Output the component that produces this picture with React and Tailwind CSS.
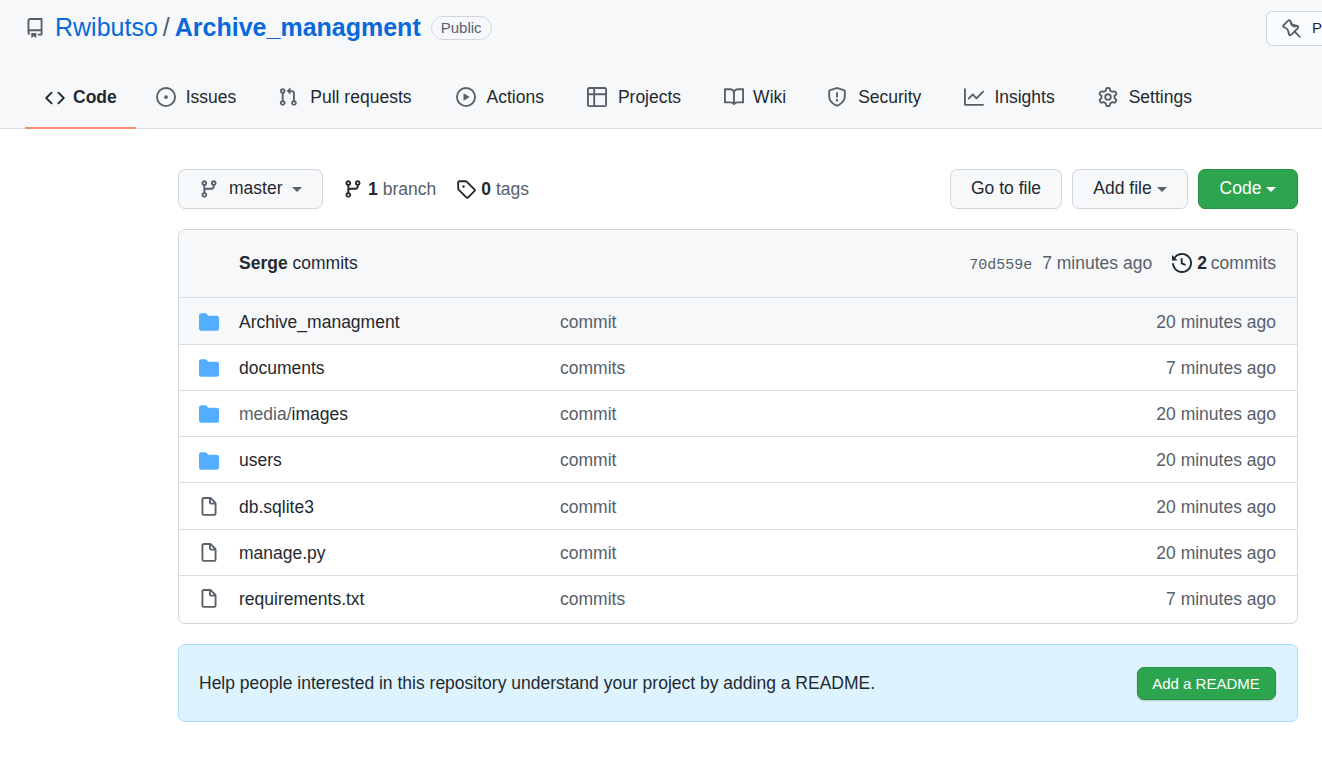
import React from "react";

const icons = {
  repo: "M2 2.5A2.5 2.5 0 014.5 0h8.75a.75.75 0 01.75.75v12.5a.75.75 0 01-.75.75h-2.5a.75.75 0 110-1.5h1.75v-2h-8a1 1 0 00-.714 1.7.75.75 0 01-1.072 1.05A2.495 2.495 0 012 11.5v-9zm10.5-1V9h-8c-.356 0-.694.074-1 .208V2.5a1 1 0 011-1h8zM5 12.25v3.25a.25.25 0 00.4.2l1.45-1.087a.25.25 0 01.3 0L8.6 15.7a.25.25 0 00.4-.2v-3.25a.25.25 0 00-.25-.25h-3.5a.25.25 0 00-.25.25z",
  code: "M4.72 3.22a.75.75 0 011.06 1.06L2.06 8l3.72 3.72a.75.75 0 11-1.06 1.06L.47 8.53a.75.75 0 010-1.06l4.25-4.25zm6.56 0a.75.75 0 10-1.06 1.06L13.94 8l-3.72 3.72a.75.75 0 101.06 1.06l4.25-4.25a.75.75 0 000-1.06l-4.25-4.25z",
  issue: "M8 9.5a1.5 1.5 0 100-3 1.5 1.5 0 000 3zM8 0a8 8 0 100 16A8 8 0 008 0zM1.5 8a6.5 6.5 0 1113 0 6.5 6.5 0 01-13 0z",
  pull: "M7.177 3.073L9.573.677A.25.25 0 0110 .854v4.792a.25.25 0 01-.427.177L7.177 3.427a.25.25 0 010-.354zM3.75 2.5a.75.75 0 100 1.5.75.75 0 000-1.5zm-2.25.75a2.25 2.25 0 113 2.122v5.256a2.251 2.251 0 11-1.5 0V5.372A2.25 2.25 0 011.5 3.25zM11 2.5h-1V4h1a1 1 0 011 1v5.628a2.251 2.251 0 101.5 0V5A2.5 2.5 0 0011 2.5zm1 10.25a.75.75 0 111.5 0 .75.75 0 01-1.5 0zM3.75 12a.75.75 0 100 1.5.75.75 0 000-1.5z",
  play: "M1.5 8a6.5 6.5 0 1113 0 6.5 6.5 0 01-13 0zM8 0a8 8 0 100 16A8 8 0 008 0zM6.379 5.227A.25.25 0 006 5.442v5.117a.25.25 0 00.379.214l4.264-2.559a.25.25 0 000-.428L6.379 5.227z",
  project: "M0 1.75C0 .784.784 0 1.75 0h12.5C15.216 0 16 .784 16 1.75v12.5A1.75 1.75 0 0114.25 16H1.75A1.75 1.75 0 010 14.25V1.75zM1.5 6.5v7.75c0 .138.112.25.25.25H5v-8H1.5zM5 5H1.5V1.75a.25.25 0 01.25-.25H5V5zm1.5 1.5v8h7.75a.25.25 0 00.25-.25V6.5h-8zm8-1.5h-8V1.5h7.75a.25.25 0 01.25.25V5z",
  book: "M0 1.75A.75.75 0 01.75 1h4.253c1.227 0 2.317.59 3 1.501A3.744 3.744 0 0111.006 1h4.245a.75.75 0 01.75.75v10.5a.75.75 0 01-.75.75h-4.507a2.25 2.25 0 00-1.591.659l-.622.621a.75.75 0 01-1.06 0l-.622-.621A2.25 2.25 0 005.258 13H.75a.75.75 0 01-.75-.75V1.75zm8.755 3a2.25 2.25 0 012.25-2.25H14.5v9h-3.757c-.71 0-1.4.201-1.992.572l.004-7.322zm-1.504 7.324l.004-5.073-.002-2.253A2.25 2.25 0 005.003 2.5H1.5v9h3.757a3.75 3.75 0 011.994.574z",
  shield: "M7.467.133a1.75 1.75 0 011.066 0l5.25 1.68A1.75 1.75 0 0115 3.48V7c0 1.566-.32 3.182-1.303 4.682-.983 1.498-2.585 2.813-5.032 3.855a1.7 1.7 0 01-1.33 0c-2.447-1.042-4.049-2.357-5.032-3.855C1.32 10.182 1 8.566 1 7V3.48a1.75 1.75 0 011.217-1.667l5.25-1.68zm.61 1.429a.25.25 0 00-.153 0l-5.25 1.68a.25.25 0 00-.174.238V7c0 1.358.275 2.666 1.057 3.86.784 1.194 2.121 2.34 4.366 3.297a.2.2 0 00.154 0c2.245-.956 3.582-2.104 4.366-3.298C13.225 9.666 13.5 8.36 13.5 7V3.48a.25.25 0 00-.174-.237l-5.25-1.68zM9 10.5a1 1 0 11-2 0 1 1 0 012 0zm-.25-5.75a.75.75 0 10-1.5 0v3a.75.75 0 001.5 0v-3z",
  graph: "M1.5 1.75a.75.75 0 00-1.5 0v12.5c0 .414.336.75.75.75h14.5a.75.75 0 000-1.5H1.5V1.75zm14.28 2.53a.75.75 0 00-1.06-1.06L10 7.94 7.53 5.47a.75.75 0 00-1.06 0L3.22 8.72a.75.75 0 001.06 1.06L7 7.06l2.47 2.47a.75.75 0 001.06 0l5.25-5.25z",
  gear: "M7.429 1.525a6.593 6.593 0 011.142 0c.036.003.108.036.137.146l.289 1.105c.147.56.55.967.997 1.189.174.086.341.183.501.29.417.278.97.423 1.53.27l1.102-.303c.11-.03.175.016.195.046.219.31.41.641.573.989.014.031.022.11-.059.19l-.815.806c-.411.406-.562.957-.53 1.456a4.588 4.588 0 010 .582c-.032.499.119 1.05.53 1.456l.815.806c.08.08.073.159.059.19a6.494 6.494 0 01-.573.99c-.02.029-.086.074-.195.045l-1.103-.303c-.559-.153-1.112-.008-1.529.27-.16.107-.327.204-.5.29-.449.222-.851.628-.998 1.189l-.289 1.105c-.029.11-.101.143-.137.146a6.613 6.613 0 01-1.142 0c-.036-.003-.108-.037-.137-.146l-.289-1.105c-.147-.56-.55-.967-.997-1.189a4.502 4.502 0 01-.501-.29c-.417-.278-.97-.423-1.53-.27l-1.102.303c-.11.03-.175-.016-.195-.046a6.492 6.492 0 01-.573-.989c-.014-.031-.022-.11.059-.19l.815-.806c.411-.406.562-.957.53-1.456a4.587 4.587 0 010-.582c.032-.499-.119-1.05-.53-1.456l-.815-.806c-.08-.08-.073-.159-.059-.19a6.44 6.44 0 01.573-.99c.02-.029.086-.075.195-.045l1.103.303c.559.153 1.112.008 1.529-.27.16-.107.327-.204.5-.29.449-.222.851-.628.998-1.189l.289-1.105c.029-.11.101-.143.137-.146zM8 0c-.236 0-.47.01-.701.03-.743.065-1.29.615-1.458 1.261l-.29 1.106c-.017.066-.078.158-.211.224a5.994 5.994 0 00-.668.386c-.123.082-.233.09-.3.071L3.27 2.776c-.644-.177-1.392.02-1.82.63a7.977 7.977 0 00-.704 1.217c-.315.675-.111 1.422.363 1.891l.815.806c.05.048.098.147.088.294a6.084 6.084 0 000 .772c.01.147-.038.246-.088.294l-.815.806c-.474.469-.678 1.216-.363 1.891.2.428.436.835.704 1.218.428.609 1.176.806 1.82.63l1.103-.303c.066-.019.176-.011.299.071.213.143.436.272.668.386.133.066.194.158.212.224l.289 1.106c.169.646.715 1.196 1.458 1.26a8.094 8.094 0 001.402 0c.743-.064 1.29-.614 1.458-1.26l.29-1.106c.017-.066.078-.158.211-.224a5.98 5.98 0 00.668-.386c.123-.082.233-.09.3-.071l1.102.302c.644.177 1.392-.02 1.82-.63.268-.382.505-.789.704-1.217.315-.675.111-1.422-.364-1.891l-.814-.806c-.05-.048-.098-.147-.088-.294a6.1 6.1 0 000-.772c-.01-.147.039-.246.088-.294l.814-.806c.475-.469.679-1.216.364-1.891a7.992 7.992 0 00-.704-1.218c-.428-.609-1.176-.806-1.82-.63l-1.103.303c-.066.019-.176.011-.299-.071a5.991 5.991 0 00-.668-.386c-.133-.066-.194-.158-.212-.224L10.16 1.29C9.99.645 9.444.095 8.701.031A8.094 8.094 0 008 0zm1.5 8a1.5 1.5 0 11-3 0 1.5 1.5 0 013 0zM11 8a3 3 0 11-6 0 3 3 0 016 0z",
  pin: "M4.456.734a1.75 1.75 0 012.826.504l.613 1.327a3.081 3.081 0 002.084 1.707l2.454.584c1.332.317 1.8 1.972.832 2.94L11.06 10l3.72 3.72a.75.75 0 11-1.06 1.06L10 11.06l-2.204 2.205c-.968.968-2.623.5-2.94-.832l-.584-2.454a3.081 3.081 0 00-1.707-2.084l-1.327-.613a1.75 1.75 0 01-.504-2.826L4.456.734zM5.92 1.866a.25.25 0 00-.404-.072L1.794 5.516a.25.25 0 00.072.404l1.328.613A4.582 4.582 0 015.73 9.63l.584 2.454a.25.25 0 00.42.12l5.47-5.47a.25.25 0 00-.12-.42L9.63 6.73a4.581 4.581 0 01-3.098-2.537L5.92 1.866z",
  branch: "M11.75 2.5a.75.75 0 100 1.5.75.75 0 000-1.5zm-2.25.75a2.25 2.25 0 113 2.122V6A2.5 2.5 0 0110 8.5H6a1 1 0 00-1 1v1.128a2.251 2.251 0 11-1.5 0V5.372a2.25 2.25 0 111.5 0v1.836A2.492 2.492 0 016 7h4a1 1 0 001-1v-.628A2.25 2.25 0 019.5 3.25zM4.25 12a.75.75 0 100 1.5.75.75 0 000-1.5zM3.5 3.25a.75.75 0 111.5 0 .75.75 0 01-1.5 0z",
  tag: "M2.5 7.775V2.75a.25.25 0 01.25-.25h5.025a.25.25 0 01.177.073l6.25 6.25a.25.25 0 010 .354l-5.025 5.025a.25.25 0 01-.354 0l-6.25-6.25a.25.25 0 01-.073-.177zm-1.5 0V2.75C1 1.784 1.784 1 2.75 1h5.025c.464 0 .91.184 1.238.513l6.25 6.25a1.75 1.75 0 010 2.474l-5.026 5.026a1.75 1.75 0 01-2.474 0l-6.25-6.25A1.75 1.75 0 011 7.775zM6 5a1 1 0 100 2 1 1 0 000-2z",
  history: "M1.643 3.143L.427 1.927A.25.25 0 000 2.104V5.75c0 .138.112.25.25.25h3.646a.25.25 0 00.177-.427L2.715 4.215a6.5 6.5 0 11-1.18 4.458.75.75 0 10-1.493.154 8.001 8.001 0 101.6-5.684zM7.75 4a.75.75 0 01.75.75v2.992l2.028.812a.75.75 0 01-.557 1.392l-2.5-1A.75.75 0 017 8.25v-3.5A.75.75 0 017.75 4z",
  folder: "M1.75 1A1.75 1.75 0 000 2.75v10.5C0 14.216.784 15 1.75 15h12.5A1.75 1.75 0 0016 13.25v-8.5A1.75 1.75 0 0014.25 3H7.5a.25.25 0 01-.2-.1l-.9-1.2C6.07 1.26 5.55 1 5 1H1.75z",
  file: "M3.75 1.5a.25.25 0 00-.25.25v11.5c0 .138.112.25.25.25h8.5a.25.25 0 00.25-.25V6H9.75A1.75 1.75 0 018 4.25V1.5H3.75zm5.75.56v2.19c0 .138.112.25.25.25h2.19L9.5 2.06zM2 1.75C2 .784 2.784 0 3.75 0h5.086c.464 0 .909.184 1.237.513l3.414 3.414c.329.328.513.773.513 1.237v8.086A1.75 1.75 0 0112.25 15h-8.5A1.75 1.75 0 012 13.25V1.75z",
};

function Icon({ name, className }) {
  return (
    <svg viewBox="0 0 16 16" width="20" height="20" fill="currentColor" fillRule="evenodd" className={"shrink-0 " + className}>
      <path d={icons[name]} />
    </svg>
  );
}

function Caret({ className }) {
  return <span className={"inline-block w-0 h-0 border-x-[5px] border-x-transparent border-t-[5px] " + className} />;
}

const tabs = [
  { icon: "issue", label: "Issues", extra: "gap-[10px]" },
  { icon: "pull", label: "Pull requests", extra: "ml-[2px] gap-[12px]" },
  { icon: "play", label: "Actions", extra: "ml-[4px] gap-[11px]" },
  { icon: "project", label: "Projects", extra: "ml-[3px] gap-[11px]" },
  { icon: "book", label: "Wiki", extra: "ml-[3px] gap-[9px]" },
  { icon: "shield", label: "Security", extra: "ml-[1px] gap-[11px]" },
  { icon: "graph", label: "Insights", extra: "ml-[3px] gap-[10px]" },
  { icon: "gear", label: "Settings", extra: "ml-[3px] gap-[11px]" },
];

const rows = [
  { type: "folder", name: "Archive_managment", msg: "commit", time: "20 minutes ago", bg: "bg-[#f6f8fa]" },
  { type: "folder", name: "documents", msg: "commits", time: "7 minutes ago" },
  { type: "folder", prefix: "media/", name: "images", msg: "commit", time: "20 minutes ago" },
  { type: "folder", name: "users", msg: "commit", time: "20 minutes ago" },
  { type: "file", name: "db.sqlite3", msg: "commit", time: "20 minutes ago" },
  { type: "file", name: "manage.py", msg: "commit", time: "20 minutes ago" },
  { type: "file", name: "requirements.txt", msg: "commits", time: "7 minutes ago" },
];

export default function App() {
  return (
    <div className="h-[769px] overflow-hidden bg-white text-[17.5px] text-[#24292f] font-['Liberation_Sans',sans-serif]">
      <header className="h-[129px] bg-[#f6f8fa] border-b border-[#d8dee4]">
        <div className="h-[80px] pl-[25px] flex items-start">
          <div className="flex items-center h-[24px] mt-[15px]">
            <Icon name="repo" className="text-[#57606a] mr-[10px] mt-[2px]" />
            <a className="text-[25px] leading-[24px] text-[#0969da]">Rwibutso</a>
            <span className="text-[25px] leading-[24px] text-[#57606a] mx-[5px]">/</span>
            <a className="text-[25px] leading-[24px] font-bold text-[#0969da]">Archive_managment</a>
            <span className="ml-[10px] h-[24px] mt-[2px] px-[9px] flex items-center border border-[#d0d7de] rounded-full text-[15px] text-[#57606a]">Public</span>
          </div>
          <div className="ml-auto mt-[11px] w-[56px] mr-0 h-[35px] pl-[15px] shrink-0 flex items-center gap-[10px] border border-r-0 border-[#d0d7de] rounded-l-[7px] bg-[#fbfcfd] text-[15px] overflow-hidden">
            <Icon name="pin" className="text-[#57606a]" />
            <span>P</span>
          </div>
        </div>
        <nav className="flex items-start h-[48px] pl-[25px]">
          <a className="h-[49px] flex items-center gap-[8px] pl-[20px] pr-[19px] pb-[12px] border-b-2 border-[#fd8c73] font-bold">
            <Icon name="code" className="text-[#24292f]" />
            Code
          </a>
          {tabs.map((t) => (
            <a key={t.label} className={"h-[48px] flex items-center px-[20px] pb-[14px] " + t.extra}>
              <Icon name={t.icon} className="text-[#57606a]" />
              {t.label}
            </a>
          ))}
        </nav>
      </header>

      <main className="ml-[178px] w-[1120px] pt-[40px]">
        <div className="flex items-center h-[40px]">
          <button className="h-[40px] w-[145px] pl-[20px] flex items-center border border-[#d0d7de] rounded-[7px] bg-[#f6f8fa]">
            <Icon name="branch" className="text-[#57606a]" />
            <span className="ml-[10px] pb-[2px]">master</span>
            <Caret className="ml-[10px] border-t-[#57606a]" />
          </button>
          <div className="flex items-center ml-[20px]">
            <Icon name="branch" className="text-[#24292f]" />
            <b className="ml-[5px]">1</b>
            <span className="ml-[5px] text-[#57606a]">branch</span>
          </div>
          <div className="flex items-center ml-[20px]">
            <Icon name="tag" className="text-[#24292f]" />
            <b className="ml-[5px]">0</b>
            <span className="ml-[5px] text-[#57606a]">tags</span>
          </div>
          <div className="ml-auto flex items-center gap-[10px]">
            <button className="h-[40px] w-[112px] pb-[2px] border border-[#d0d7de] rounded-[7px] bg-[#f6f8fa]">Go to file</button>
            <button className="h-[40px] w-[116px] flex items-center justify-center gap-[5px] border border-[#d0d7de] rounded-[7px] bg-[#f6f8fa]">
              <span className="pb-[2px]">Add file</span>
              <Caret className="border-t-[#57606a]" />
            </button>
            <button className="h-[40px] w-[100px] flex items-center justify-center gap-[5px] border border-[#288f44] rounded-[7px] bg-[#2da44e] text-white">
              <span className="pb-[2px]">Code</span>
              <Caret className="border-t-white" />
            </button>
          </div>
        </div>

        <section className="mt-[20px] h-[395px] border border-[#d0d7de] rounded-[7px] overflow-hidden">
          <div className="h-[67.4px] flex items-center pl-[60px] pr-[21px] pb-[1px] bg-[#f6f8fa]">
            <span><b>Serge</b> commits</span>
            <div className="ml-auto flex items-center">
              <span className="font-['Liberation_Mono',monospace] text-[15px] text-[#57606a] mt-[6px]">70d559e</span>
              <span className="ml-[10px] text-[#57606a]">7 minutes ago</span>
              <Icon name="history" className="ml-[20px] text-[#24292f]" />
              <b className="ml-[5px]">2</b>
              <span className="ml-[4px] text-[#57606a]">commits</span>
            </div>
          </div>
          {rows.map((r) => (
            <div key={r.name} className={"h-[46.25px] flex items-center pl-[20px] pr-[21px] pt-[1.7px] border-t border-[#d8dee4] " + (r.bg || "")}>
              <Icon name={r.type} className={"w-[20px] " + (r.type === "folder" ? "text-[#54aeff]" : "text-[#57606a]")} />
              <span className="ml-[20px] w-[321px]">
                {r.prefix && <span className="text-[#57606a]">{r.prefix}</span>}
                {r.name}
              </span>
              <span className="text-[#57606a]">{r.msg}</span>
              <span className="ml-auto text-[#57606a]">{r.time}</span>
            </div>
          ))}
        </section>

        <section className="mt-[20px] h-[78px] flex items-center justify-between pl-[20px] pr-[21px] bg-[#ddf4ff] border border-[#a8dcff] rounded-[7px]">
          <span>Help people interested in this repository understand your project by adding a README.</span>
          <button className="h-[33px] w-[139px] mt-[1px] pr-[1px] pt-[1px] rounded-[7px] bg-[#2da44e] border border-[#288f44] text-white text-[15px] shadow-[0_1px_2px_rgba(27,31,36,0.2)]">Add a README</button>
        </section>
      </main>
    </div>
  );
}
